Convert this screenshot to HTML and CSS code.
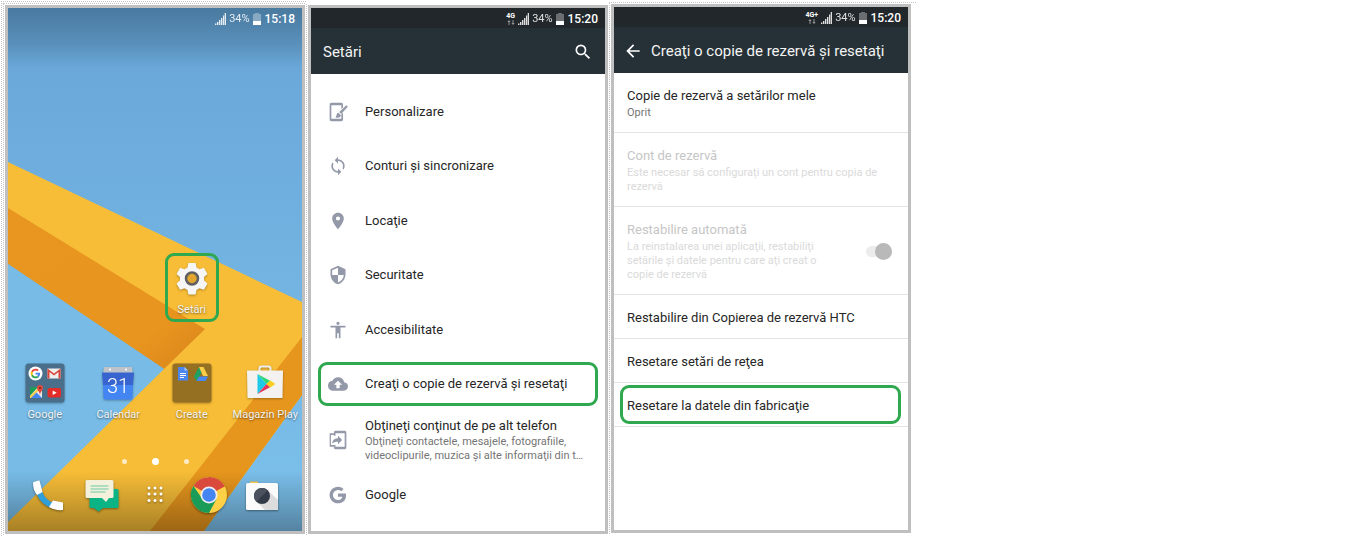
FILE: index.html
```html
<!DOCTYPE html>
<html lang="ro">

<head>
    <meta charset="UTF-8">
    <meta name="viewport" content="width=device-width, initial-scale=1.0">
    <title>Resetare la datele din fabricaţie</title>
    <link rel="stylesheet" href="styles.css">
</head>

<body>
    <!-- shared status bar icons -->
    <svg class="sprite" aria-hidden="true">
        <symbol id="signal" viewBox="0 0 11 12">
            <path d="M0 10.5h1.4V12H0zM2 9h1.4v3H2zM4 7h1.4v5H4zM6 5h1.4v7H6zM8 2.5h1.2V12H8zM9.700 0H11v12H9.700z" fill="#fff" opacity=".85"/>
        </symbol>
        <symbol id="battery" viewBox="0 0 8 12">
            <path d="M2 0h4v1h2v11H0V1h2z" fill="#fff" opacity=".33"/>
            <path d="M0 8h8v4H0z" fill="#fff"/>
        </symbol>
        <symbol id="arrows" viewBox="0 0 8 5">
            <path d="M2 0l1.700 2H2.500v3h-1V2H.3zM6 5L4.300 3h1.200V0h1v3h1.200z" fill="#fff" opacity=".5"/>
        </symbol>
    </svg>

    <div class="steps">
        <div class="step step-first">
            <div class="step-inner">
                <div class="phone home">
                    <svg class="wallpaper" viewBox="0 0 294 523" preserveAspectRatio="none" aria-hidden="true">
                        <defs>
                            <linearGradient id="sky" x1="0" y1="0" x2="0" y2="1">
                                <stop offset="0" stop-color="#68a5d7"/>
                                <stop offset="1" stop-color="#7cc1ec"/>
                            </linearGradient>
                            <linearGradient id="fold" x1="0" y1="0" x2="1" y2="1">
                                <stop offset="0" stop-color="#e8961f"/>
                                <stop offset=".75" stop-color="#e8951f"/>
                                <stop offset="1" stop-color="#d9841c"/>
                            </linearGradient>
                            <linearGradient id="shadeTop" x1="0" y1="0" x2="0" y2="1">
                                <stop offset="0" stop-color="#173345" stop-opacity=".38"/>
                                <stop offset=".6" stop-color="#173345" stop-opacity=".2"/>
                                <stop offset="1" stop-color="#173345" stop-opacity="0"/>
                            </linearGradient>
                            <linearGradient id="shadeBottom" x1="0" y1="0" x2="0" y2="1">
                                <stop offset="0" stop-color="#000" stop-opacity="0"/>
                                <stop offset="1" stop-color="#000" stop-opacity=".32"/>
                            </linearGradient>
                        </defs>
                        <path d="M0 0h294v523H0z" fill="url(#sky)"/>
                        <path d="M0 154L294 294V387L196 523H0V513L156 360L0 250z" fill="#f7bd37"/>
                        <path d="M0 200L197 321L156 361L0 256z" fill="url(#fold)"/>
                        <path d="M0 256L156 361L0 514z" fill="#77bbe6"/>
                        <path d="M294 329V387L196 523H142z" fill="#e7961d"/>
                        <path d="M0 0h294v60H0z" fill="url(#shadeTop)"/>
                        <path d="M0 463h294v60H0z" fill="url(#shadeBottom)"/>
                    </svg>

                    <div class="status">
                        <svg class="signal"><use href="#signal"/></svg>
                        <span class="percent">34%</span>
                        <svg class="battery"><use href="#battery"/></svg>
                        <span class="time">15:18</span>
                    </div>

                    <div class="apps">
                        <a class="app app-settings marked" href="#">
                            <svg class="app-icon" viewBox="0 0 40 40">
                                <path d="M16.400 5h7.200l.9 4.600 3 1.700 4.400-1.500 3.600 6.200-3.500 3.100v3.400l3.500 3.100-3.600 6.200-4.400-1.500-3 1.700-.9 4.600h-7.200l-.9-4.600-3-1.700-4.400 1.500-3.600-6.200L8 22.500v-3.400L4.500 16l3.600-6.200 4.400 1.500 3-1.700z" fill="#f6f6f6"/>
                                <circle cx="20" cy="20.500" r="6" fill="#e2a52d" stroke="#5f5f62" stroke-width="2.500"/>
                            </svg>
                            <span>Setări</span>
                        </a>
                        <a class="app" href="#">
                            <svg class="app-icon" viewBox="0 0 40 40">
                                <rect x=".5" y=".5" width="39" height="39" rx="3" fill="#4a6f8a"/>
                                <circle cx="10.500" cy="10.500" r="7" fill="#fff"/>
                                <g transform="translate(5.700 5.700) scale(.2)">
                                    <path fill="#EA4335" d="M24 9.500c3.540 0 6.710 1.220 9.210 3.600l6.850-6.850C35.900 2.380 30.470 0 24 0 14.620 0 6.510 5.380 2.560 13.220l7.980 6.190C12.430 13.720 17.740 9.500 24 9.500z"/>
                                    <path fill="#4285F4" d="M46.980 24.550c0-1.570-.15-3.090-.38-4.550H24v9.020h12.940c-.58 2.960-2.260 5.480-4.780 7.180l7.730 6c4.510-4.180 7.090-10.360 7.090-17.650z"/>
                                    <path fill="#FBBC05" d="M10.530 28.590c-.48-1.450-.76-2.990-.76-4.590s.27-3.140.76-4.590l-7.980-6.190C.92 16.460 0 20.120 0 24c0 3.880.92 7.540 2.560 10.780z"/>
                                    <path fill="#34A853" d="M24 48c6.480 0 11.930-2.130 15.890-5.810l-7.730-6c-2.150 1.450-4.920 2.300-8.160 2.300-6.260 0-11.570-4.220-13.470-9.910l-7.980 6.190C6.510 42.620 14.620 48 24 48z"/>
                                </g>
                                <path d="M22.500 5.500h13v10h-13z" fill="#eee"/>
                                <path d="M22.500 15.500v-10l6.500 5 6.500-5v10h-2V9L29 12.600 24.500 9v6.500z" fill="#d8473b"/>
                                <path d="M5 24h12v11H5z" fill="#e8e8e8"/>
                                <path d="M5 24h8L5 33z" fill="#1f9d58"/>
                                <path d="M5 35l6-6 6 6z" fill="#4285f4"/>
                                <path d="M5 33l9-9 1.500 1.500L6 35H5z" fill="#fbd04b"/>
                                <path d="M15 22a3 3 0 0 1 3 3c0 2.500-2.500 3-3 7-.5-4-3-4.500-3-7a3 3 0 0 1 3-3z" fill="#df4a3f"/>
                                <circle cx="15" cy="25" r="1" fill="#7d231d"/>
                                <rect x="22.500" y="25" width="13.500" height="9.500" rx="2" fill="#e32b28"/>
                                <path d="M27.700 27.500v4.400l4-2.200z" fill="#fff"/>
                            </svg>
                            <span>Google</span>
                        </a>
                        <a class="app" href="#">
                            <svg class="app-icon" viewBox="0 0 40 40">
                                <path d="M6 4h28l1 7H5z" fill="#bfc3c9"/>
                                <circle cx="12" cy="6.500" r="1" fill="#fff"/>
                                <circle cx="28" cy="6.500" r="1" fill="#fff"/>
                                <path d="M4 9.500h32l-1 12.500H5z" fill="#3764cf"/>
                                <path d="M5 22h30l-.5 13a1.500 1.500 0 0 1-1.500 1.500H7A1.500 1.500 0 0 1 5.500 35z" fill="#4385f2"/>
                                <text x="20" y="29.500" class="calendar-day">31</text>
                            </svg>
                            <span>Calendar</span>
                        </a>
                        <a class="app" href="#">
                            <svg class="app-icon" viewBox="0 0 40 40">
                                <rect x=".5" y=".5" width="39" height="39" rx="3" fill="#957023"/>
                                <path d="M6 4h6.500l3.500 3.500V17.500H6z" fill="#4a86ee"/>
                                <path d="M12.500 4v3.500H16z" fill="#a9c7fa"/>
                                <path d="M8 10.500h6M8 12.500h6M8 14.500h4" stroke="#fff" stroke-width="1"/>
                                <path d="M27 4l3 5-5.500 9L22 13.500z" fill="#1da261"/>
                                <path d="M27 4h4.500l4.500 9h-5z" fill="#fccd48"/>
                                <path d="M27 13.500h9L33.500 18h-9z" fill="#4688f4"/>
                            </svg>
                            <span>Create</span>
                        </a>
                        <a class="app" href="#">
                            <svg class="app-icon" viewBox="0 0 40 40">
                                <path d="M14.500 8V5.500a2 2 0 0 1 2-2h7a2 2 0 0 1 2 2V8" fill="none" stroke="#eee" stroke-width="2"/>
                                <path d="M2 7.500h36L37.500 35H2.500z" fill="#f3f2f0"/>
                                <path d="M12.500 11l9 10-9 10z" fill="#1ec9e8"/>
                                <path d="M12.500 11l13 7-4 3z" fill="#2fd67a"/>
                                <path d="M12.500 31l13-7-4-3z" fill="#e4345b"/>
                                <path d="M25 17.500l5.500 3.500-5.500 3.500-3.500-3.500z" fill="#fbce20"/>
                            </svg>
                            <span>Magazin Play</span>
                        </a>
                    </div>

                    <div class="pager">
                        <i></i>
                        <i class="current"></i>
                        <i></i>
                    </div>

                    <div class="dock">
                        <a href="#" aria-label="Telefon">
                            <svg viewBox="0 0 40 40">
                                <path d="M8 16c1 8 9 15.500 16 17l2-5c-6-2-10-6-12-12z" fill="#2f9fdc"/>
                                <path d="M5 7.500c2-1 4-1.700 6.500-2L14.500 17l-5.500 3C6 16.500 5 12 5 7.500z" fill="#fff"/>
                                <path d="M21 32l4-6.500L35 27.500V35c-5 .5-10-.5-14-3z" fill="#fff"/>
                            </svg>
                        </a>
                        <a href="#" aria-label="Mesaje">
                            <svg viewBox="0 0 40 40">
                                <path d="M10 14h26a1.500 1.500 0 0 1 1.500 1.500v16A1.500 1.500 0 0 1 36 33H22l-4.500 3.500L13 33h-3a1.500 1.500 0 0 1-1.500-1.500v-16A1.500 1.500 0 0 1 10 14z" fill="#0bb385"/>
                                <path d="M6 5h25a1.500 1.500 0 0 1 1.500 1.500v15A1.500 1.500 0 0 1 31 23h-3l-3 4-4-4H6a1.500 1.500 0 0 1-1.500-1.500v-15A1.500 1.500 0 0 1 6 5z" fill="#f3f1dc"/>
                                <path d="M9.500 11h18M9.500 14h18M9.500 17h15" stroke="#6bc9a5" stroke-width="1.200"/>
                            </svg>
                        </a>
                        <a href="#" aria-label="Aplicaţii">
                            <svg viewBox="0 0 40 40" fill="#fff">
                                <circle cx="14" cy="13" r="1.500"/><circle cx="20" cy="13" r="1.500"/><circle cx="26" cy="13" r="1.500"/>
                                <circle cx="14" cy="19" r="1.500"/><circle cx="20" cy="19" r="1.500"/><circle cx="26" cy="19" r="1.500"/>
                                <circle cx="14" cy="25.500" r="1.500"/><circle cx="20" cy="25.500" r="1.500"/><circle cx="26" cy="25.500" r="1.500"/>
                            </svg>
                        </a>
                        <a href="#" aria-label="Chrome">
                            <svg viewBox="0 0 40 40">
                                <circle cx="20" cy="20" r="18" fill="#fdd045"/>
                                <path d="M20 20L4.400 11A18 18 0 0 1 35.600 11.500z" fill="#d94a3d"/>
                                <path d="M20 11.500h15.600A18 18 0 0 0 20 2z" fill="#d94a3d"/>
                                <path d="M4.400 11A18 18 0 0 0 20 38l7.500-14L12 22z" fill="#1a9c58"/>
                                <circle cx="20" cy="20" r="8.500" fill="#eee"/>
                                <circle cx="20" cy="20" r="6.800" fill="#4485f2"/>
                            </svg>
                        </a>
                        <a href="#" aria-label="Cameră">
                            <svg viewBox="0 0 40 40">
                                <path d="M8 6.500h8V10H8z" fill="#f3c64f"/>
                                <rect x="4" y="8" width="32" height="27" rx="1.500" fill="#fbfbfb"/>
                                <path d="M25.500 15L36 25v10H23l-8-8z" fill="#dcdcdc"/>
                                <circle cx="20" cy="21" r="8" fill="#343b48"/>
                                <path d="M14.300 26.700L25.700 15.300A8 8 0 0 0 14.300 26.700z" fill="#4b525d"/>
                            </svg>
                        </a>
                    </div>
                </div>
            </div>
        </div>

        <div class="step step-second">
            <div class="phone settings">
                <div class="status">
                    <span class="network"><b>4G</b><svg><use href="#arrows"/></svg></span>
                    <svg class="signal"><use href="#signal"/></svg>
                    <span class="percent">34%</span>
                    <svg class="battery"><use href="#battery"/></svg>
                    <span class="time">15:20</span>
                </div>
                <div class="toolbar">
                    <h2>Setări</h2>
                    <button type="button" class="icon-button" aria-label="Caută">
                        <svg viewBox="0 0 24 24"><path d="M15.500 14h-.79l-.28-.27A6.471 6.471 0 0 0 16 9.500 6.500 6.500 0 1 0 9.500 16c1.610 0 3.090-.59 4.230-1.570l.27.28v.79l5 4.990L20.490 19l-4.990-5zm-6 0C7.010 14 5 11.990 5 9.500S7.010 5 9.500 5 14 7.010 14 9.500 11.990 14 9.500 14z"/></svg>
                    </button>
                </div>
                <div class="menu">
                    <a class="menu-item" href="#">
                        <svg viewBox="0 0 24 24"><path d="M4 1h12a2 2 0 0 1 2 2v3.500l-2 2V4H4v16h12v-5l2-2v8a2 2 0 0 1-2 2H4a2 2 0 0 1-2-2V3a2 2 0 0 1 2-2z"/><path d="M22 4l1.800 1.800-8 8.500-2.300-2.300zM12.500 13l3 3c0 2.500-3 3.500-6.500 2.500 1.700-1 .5-5 3.500-5.500z"/></svg>
                        <span class="name">Personalizare</span>
                    </a>
                    <a class="menu-item" href="#">
                        <svg viewBox="0 0 24 24"><path d="M12 4V1L8 5l4 4V6c3.310 0 6 2.690 6 6 0 1.010-.25 1.970-.7 2.800l1.460 1.460A7.930 7.930 0 0 0 20 12c0-4.420-3.580-8-8-8zm0 14c-3.310 0-6-2.690-6-6 0-1.010.25-1.970.7-2.800L5.240 7.740A7.930 7.930 0 0 0 4 12c0 4.420 3.580 8 8 8v3l4-4-4-4v3z"/></svg>
                        <span class="name">Conturi și sincronizare</span>
                    </a>
                    <a class="menu-item" href="#">
                        <svg viewBox="0 0 24 24"><path d="M12 2C8.130 2 5 5.130 5 9c0 5.250 7 13 7 13s7-7.750 7-13c0-3.870-3.130-7-7-7zm0 9.500a2.500 2.500 0 0 1 0-5 2.500 2.500 0 0 1 0 5z"/></svg>
                        <span class="name">Locaţie</span>
                    </a>
                    <a class="menu-item" href="#">
                        <svg viewBox="0 0 24 24"><path d="M12 1L3 5v6c0 5.550 3.840 10.740 9 12 5.160-1.260 9-6.450 9-12V5l-9-4zm0 10.990h7c-.53 4.120-3.280 7.790-7 8.940V12H5V6.300l7-3.110v8.800z"/></svg>
                        <span class="name">Securitate</span>
                    </a>
                    <a class="menu-item" href="#">
                        <svg viewBox="0 0 24 24"><path d="M12 2a2 2 0 1 1 0 4 2 2 0 0 1 0-4zm9 7h-6v13h-2v-6h-2v6H9V9H3V7h18v2z"/></svg>
                        <span class="name">Accesibilitate</span>
                    </a>
                    <a class="menu-item marked" href="#">
                        <svg viewBox="0 0 24 24"><path d="M19.350 10.040A7.490 7.490 0 0 0 12 4C9.110 4 6.600 5.640 5.350 8.040A5.994 5.994 0 0 0 0 14c0 3.310 2.690 6 6 6h13c2.760 0 5-2.240 5-5 0-2.640-2.050-4.780-4.650-4.960zM14 13v4h-4v-4H7l5-5 5 5h-3z"/></svg>
                        <span class="name">Creaţi o copie de rezervă și resetaţi</span>
                    </a>
                    <a class="menu-item" href="#">
                        <svg viewBox="0 0 24 24"><path d="M9 1h11a2 2 0 0 1 2 2v18a2 2 0 0 1-2 2H9a2 2 0 0 1-2-2v-1h13V4H9v3H7V3a2 2 0 0 1 2-2z"/><path d="M2 4h5v2H3.500v12H9v2H2zM5 16c.5-4 3-6 7-6V7l5 5-5 5v-3c-3 0-5 .5-7 2z"/></svg>
                        <span>
                            <span class="name">Obţineţi conţinut de pe alt telefon</span>
                            <span class="note">Obţineţi contactele, mesajele, fotografiile, videoclipurile, muzica și alte informaţii din t…</span>
                        </span>
                    </a>
                    <a class="menu-item" href="#">
                        <svg viewBox="0 0 24 24"><path d="M12 10.300v3.700h5.200c-.5 2.300-2.400 4-5.200 4a6 6 0 1 1 3.900-10.500l2.800-2.800A10 10 0 1 0 12 22c5.800 0 9.700-4 9.700-9.800 0-.7-.1-1.300-.2-1.900z"/></svg>
                        <span class="name">Google</span>
                    </a>
                </div>
            </div>
        </div>

        <div class="step step-third">
            <div class="phone backup">
                <div class="status">
                    <span class="network"><b>4G+</b><svg><use href="#arrows"/></svg></span>
                    <svg class="signal"><use href="#signal"/></svg>
                    <span class="percent">34%</span>
                    <svg class="battery"><use href="#battery"/></svg>
                    <span class="time">15:20</span>
                </div>
                <div class="toolbar">
                    <button type="button" class="icon-button" aria-label="Înapoi">
                        <svg viewBox="0 0 24 24"><path d="M20 11H7.830l5.590-5.590L12 4l-8 8 8 8 1.410-1.410L7.830 13H20v-2z"/></svg>
                    </button>
                    <h2>Creaţi o copie de rezervă și resetaţi</h2>
                </div>
                <div class="options">
                    <a class="option" href="#">
                        <span class="name">Copie de rezervă a setărilor mele</span>
                        <span class="note">Oprit</span>
                    </a>
                    <div class="option disabled">
                        <span class="name">Cont de rezervă</span>
                        <span class="note">Este necesar să configurați un cont pentru copia de rezervă</span>
                    </div>
                    <div class="option disabled with-switch">
                        <label for="autoRestore">
                            <span class="name">Restabilire automată</span>
                            <span class="note">La reinstalarea unei aplicaţii, restabiliţi setările și datele pentru care aţi creat o copie de rezervă</span>
                        </label>
                        <input type="checkbox" class="switch" id="autoRestore" checked disabled>
                    </div>
                    <a class="option" href="#"><span class="name">Restabilire din Copierea de rezervă HTC</span></a>
                    <a class="option" href="#"><span class="name">Resetare setări de reţea</span></a>
                    <a class="option marked" href="#"><span class="name">Resetare la datele din fabricaţie</span></a>
                </div>
            </div>
        </div>
    </div>
</body>

</html>
```

FILE: styles.css
```css
*,
*::before,
*::after {
    box-sizing: border-box;
}

body {
    margin: 0;
    padding: 1px;
    background-color: #fff;
    color: #262626;
    font-family: Roboto, "Liberation Sans", sans-serif;
    font-size: 13px;
}

a {
    color: inherit;
    text-decoration: none;
}

.sprite {
    position: absolute;
    width: 0;
    height: 0;
}

/* Three screens side by side */
.steps {
    display: flex;
    align-items: flex-start;
}

.step {
    padding: 1px;
    border: 0 dotted #c4c4c4;
    border-left-width: 1px;
}

.step-first {
    border-top-width: 1px;
}

.step-inner {
    padding: 1px 0 1px 1px;
    border: 0 dotted #c4c4c4;
    border-width: 1px 0 0 1px;
}

.step-second {
    margin-top: 3px;
}

.step-third {
    margin-top: 1px;
    padding-right: 5px;
    border-top-width: 1px;
}

.phone {
    position: relative;
    display: flex;
    flex-direction: column;
    width: 300px;
    min-height: 529px;
    border: 3px solid #bfbfbf;
}

/* Status bar */
.status {
    position: relative;
    display: flex;
    align-items: center;
    justify-content: flex-end;
    gap: 3px;
    height: 20px;
    padding: 1px 7px 0 0;
    color: #fff;
    font-size: 12px;
}

.signal {
    width: 11px;
    height: 12px;
}

.battery {
    width: 8px;
    height: 12px;
}

.percent {
    font-size: 11px;
    opacity: 0.85;
}

.time {
    padding-left: 1px;
    font-weight: 500;
}

.network {
    display: flex;
    flex-direction: column;
    align-items: center;
    font-size: 7px;
    line-height: 7px;
}

.network svg {
    width: 8px;
    height: 5px;
}

/* Home screen */
.home {
    color: #f4f4f4;
}

.wallpaper {
    position: absolute;
    top: 0;
    left: 0;
    width: 100%;
    height: 100%;
}

.apps {
    position: relative;
    display: grid;
    grid-template-columns: repeat(4, 1fr);
    row-gap: 46px;
    margin-top: 230px;
}

.app {
    position: relative;
    display: flex;
    flex-direction: column;
    align-items: center;
    gap: 5px;
    font-size: 11px;
    line-height: 14px;
    white-space: nowrap;
    text-shadow: 0 1px 2px rgba(0, 0, 0, 0.5);
}

.app-settings {
    grid-column: 3;
}

.app-settings + .app {
    grid-column: 1;
}

.app-icon {
    width: 40px;
    height: 40px;
    filter: drop-shadow(0 1px 1px rgba(0, 0, 0, 0.3));
}

.calendar-day {
    fill: #fff;
    font-size: 20px;
    font-weight: 300;
    text-anchor: middle;
    text-shadow: none;
}

.pager {
    position: relative;
    display: flex;
    align-items: center;
    justify-content: center;
    gap: 25px;
    height: 8px;
    margin-top: 35px;
}

.pager i {
    width: 5px;
    height: 5px;
    border-radius: 50%;
    background-color: #fff;
    opacity: 0.7;
}

.pager .current {
    width: 7px;
    height: 7px;
    opacity: 1;
}

.dock {
    position: relative;
    display: flex;
    margin-top: 10px;
    padding: 0 13px;
}

.dock a {
    flex: 1;
    display: flex;
    justify-content: center;
}

.dock svg {
    width: 40px;
    height: 40px;
    filter: drop-shadow(0 1px 1px rgba(0, 0, 0, 0.4));
}

/* Settings screens */
.settings .status,
.backup .status {
    background-color: #22272b;
}

.toolbar {
    display: flex;
    align-items: center;
    height: 46px;
    padding: 1px 12px 0;
    background-color: #263137;
    color: #f4f4f4;
}

.toolbar h2 {
    flex: 1;
    margin: 0;
    font-size: 15px;
    font-weight: 400;
    white-space: nowrap;
}

.icon-button {
    display: flex;
    padding: 0;
    border: none;
    background: none;
    cursor: pointer;
}

.icon-button svg {
    width: 20px;
    height: 20px;
    fill: #fff;
}

.backup .toolbar {
    gap: 8px;
    padding-left: 9px;
}

.name,
.note {
    display: block;
}

.name {
    line-height: 18px;
}

.note {
    color: #757575;
    font-size: 11px;
    line-height: 14px;
}

.menu {
    flex: 1;
    display: flex;
    flex-direction: column;
    justify-content: space-between;
    padding: 11px 0 9px;
}

.menu-item {
    position: relative;
    display: flex;
    align-items: center;
    gap: 17px;
    min-height: 54px;
    padding: 5px 10px 5px 17px;
}

.menu-item svg {
    flex: none;
    width: 20px;
    height: 20px;
    fill: #9499a9;
}

.option {
    position: relative;
    display: block;
    padding: 14px 13px 12px;
    border-bottom: 1px solid #e4e4e4;
}

.option .name:only-child {
    line-height: 17px;
}

.option .note {
    padding-top: 1px;
}

.disabled .name {
    color: #c6c6c6;
}

.disabled .note {
    color: #dadada;
}

.with-switch {
    display: flex;
    align-items: center;
    justify-content: space-between;
    gap: 36px;
    padding-right: 16px;
}

.switch {
    appearance: none;
    flex: none;
    display: flex;
    align-items: center;
    justify-content: flex-end;
    width: 26px;
    height: 11px;
    margin: 0;
    border-radius: 6px;
    background-color: #ececec;
}

.switch::before {
    content: "";
    width: 17px;
    height: 17px;
    border-radius: 50%;
    background-color: #b9b9b9;
}

/* Green frame around the entry to tap */
.marked::after {
    content: "";
    position: absolute;
    inset: 5px 7px;
    border: 3px solid #2fa84f;
    border-radius: 9px;
}

.option.marked::after {
    inset: 2px 7px 2px 6px;
}

.app.marked::after {
    inset: -5px 10px;
}
```
